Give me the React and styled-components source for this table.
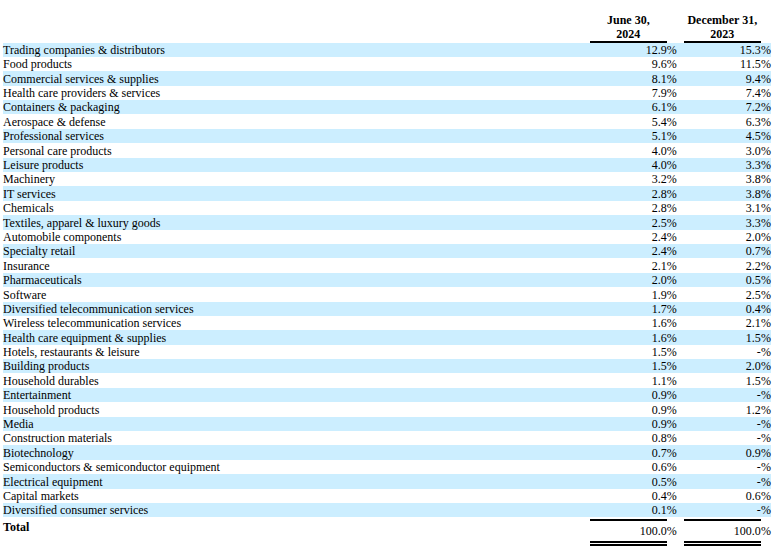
import { createGlobalStyle, styled } from 'styled-components';

const rows = [
  ['Trading companies & distributors', '12.9', '15.3'],
  ['Food products', '9.6', '11.5'],
  ['Commercial services & supplies', '8.1', '9.4'],
  ['Health care providers & services', '7.9', '7.4'],
  ['Containers & packaging', '6.1', '7.2'],
  ['Aerospace & defense', '5.4', '6.3'],
  ['Professional services', '5.1', '4.5'],
  ['Personal care products', '4.0', '3.0'],
  ['Leisure products', '4.0', '3.3'],
  ['Machinery', '3.2', '3.8'],
  ['IT services', '2.8', '3.8'],
  ['Chemicals', '2.8', '3.1'],
  ['Textiles, apparel & luxury goods', '2.5', '3.3'],
  ['Automobile components', '2.4', '2.0'],
  ['Specialty retail', '2.4', '0.7'],
  ['Insurance', '2.1', '2.2'],
  ['Pharmaceuticals', '2.0', '0.5'],
  ['Software', '1.9', '2.5'],
  ['Diversified telecommunication services', '1.7', '0.4'],
  ['Wireless telecommunication services', '1.6', '2.1'],
  ['Health care equipment & supplies', '1.6', '1.5'],
  ['Hotels, restaurants & leisure', '1.5', '-'],
  ['Building products', '1.5', '2.0'],
  ['Household durables', '1.1', '1.5'],
  ['Entertainment', '0.9', '-'],
  ['Household products', '0.9', '1.2'],
  ['Media', '0.9', '-'],
  ['Construction materials', '0.8', '-'],
  ['Biotechnology', '0.7', '0.9'],
  ['Semiconductors & semiconductor equipment', '0.6', '-'],
  ['Electrical equipment', '0.5', '-'],
  ['Capital markets', '0.4', '0.6'],
  ['Diversified consumer services', '0.1', '-'],
];

const GlobalStyle = createGlobalStyle`
  body {
    margin: 0;
    background: #fff;
    color: #000;
    font-family: "Liberation Serif", "Times New Roman", serif;
    font-size: 12px;
  }
`;

const App = () => {
  return (
    <>
      <GlobalStyle />
      <StPage>
        <StHeadRow>
          <span />
          <StHead>
            June 30,
            <br />
            2024
          </StHead>
          <span />
          <span />
          <StHead>
            December 31,
            <br />
            2023
          </StHead>
          <span />
        </StHeadRow>
        {rows.map(([label, june, dec], i) => (
          <StRow key={label} $shaded={i % 2 === 0}>
            <StLabel>{label}</StLabel>
            <StNum>{june}</StNum>
            <StPct>%</StPct>
            <span />
            <StNum>{dec}</StNum>
            <StPct>%</StPct>
          </StRow>
        ))}
        <StTotalRow>
          <StTotalLabel>Total</StTotalLabel>
          <StTotalNum>100.0</StTotalNum>
          <StTotalPct>%</StTotalPct>
          <span />
          <StTotalNum>100.0</StTotalNum>
          <StTotalPct>%</StTotalPct>
        </StTotalRow>
      </StPage>
    </>
  );
};

const StPage = styled.main`
  width: 768px;
  padding: 11.5px 0 0 3px;
`;

const StHeadRow = styled.div`
  display: grid;
  grid-template-columns: 587px 76.7px 9.3px 8px 76.7px 10.3px;
  line-height: 14.4px;
`;

const StRow = styled(StHeadRow)`
  height: 14.4px;
  padding-top: 1.4px;
  box-sizing: border-box;
  line-height: 13px;
  background: ${(p) => (p.$shaded ? '#cceeff' : 'transparent')};
`;

const StTotalRow = styled(StHeadRow)`
  margin-top: 2px;
  align-items: start;
`;

const StHead = styled.div`
  font-weight: 700;
  text-align: center;
  white-space: nowrap;
  padding-top: 1px;
  line-height: 14px;
  border-bottom: 2px solid #000;
`;

const StLabel = styled.div`
  white-space: nowrap;
`;

const StTotalLabel = styled(StLabel)`
  font-weight: 700;
  padding-top: 1px;
`;

const StNum = styled.div`
  text-align: right;
`;

const StPct = styled.div`
  text-align: right;
`;

const StTotalNum = styled(StNum)`
  border-top: 2px solid #000;
  padding: 2.8px 0 2.6px;
  border-bottom: 5px double #000;
`;

const StTotalPct = styled(StPct)`
  padding-top: 4.8px;
`;

export default App;
